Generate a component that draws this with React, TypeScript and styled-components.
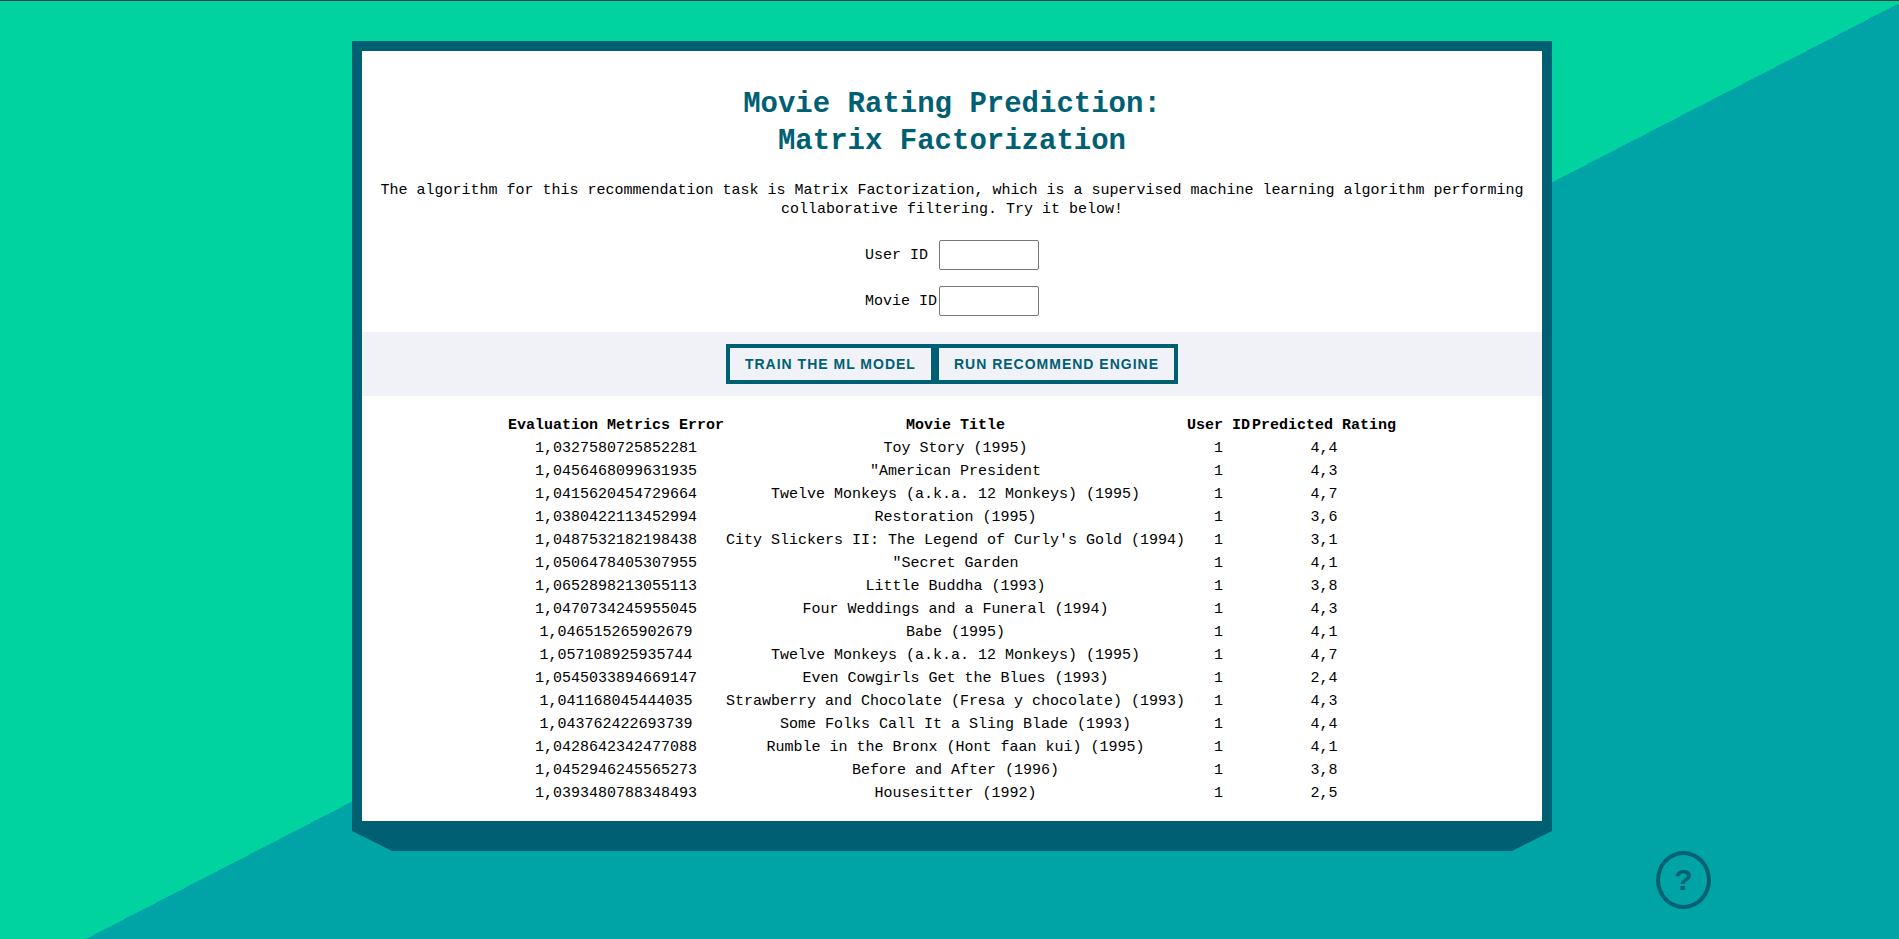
import React from "react";
import styled, { createGlobalStyle } from "styled-components";

const colors = {
  green: "#01d3a0",
  teal: "#00a4a6",
  dark: "#006073",
  band: "#f0f2f7",
};

const GlobalStyle = createGlobalStyle`
  * { box-sizing: border-box; }
  body { margin: 0; }
`;

const Page = styled.main`
  min-height: 100vh;
  padding: 40px 0 30px 5px;
  border-top: 1px solid #3c4043;
  background: ${colors.teal}
    linear-gradient(to bottom right, ${colors.green} calc(50% + 2px), ${colors.teal} calc(50% + 2px))
    0 0 / 100% calc(100% + 42px) no-repeat;
  font-family: "Liberation Mono", monospace;
  font-size: 15px;
  line-height: 19px;
  color: #000;
`;

const Card = styled.section`
  max-width: 1200px;
  margin: 0 auto;
  border: 10px solid ${colors.dark};
  background: #fff;
  text-align: center;
`;

const CardBase = styled.div`
  max-width: 1200px;
  height: 20px;
  margin: 0 auto;
  background: ${colors.dark};
  clip-path: polygon(0 0, 100% 0, calc(100% - 40px) 100%, 40px 100%);
`;

const Intro = styled.header`
  padding: 35px 15px 0;
`;

const Title = styled.h1`
  margin: 0;
  font-size: 29px;
  line-height: 37px;
  color: ${colors.dark};
`;

const Description = styled.p`
  margin: 21px 0 0;
`;

const Fields = styled.div`
  display: flex;
  flex-direction: column;
  align-items: center;
  gap: 16px;
  padding: 21px 0 16px;
`;

const Field = styled.div`
  display: flex;
  align-items: center;
  width: 174px;
`;

const FieldLabel = styled.label`
  flex: 1;
  text-align: left;
  white-space: nowrap;
`;

const FieldInput = styled.input`
  width: 100px;
  height: 30px;
  border: 1px solid #767676;
  border-radius: 2px;
  background: #fff;
  font: inherit;
`;

const Actions = styled.div`
  display: flex;
  justify-content: center;
  padding: 12px 0;
  background: ${colors.band};
`;

const ActionButton = styled.button`
  height: 40px;
  padding: 0 15px;
  border: 4px solid ${colors.dark};
  background: transparent;
  color: ${colors.dark};
  font: bold 14px "Liberation Sans", Arial, sans-serif;
  letter-spacing: 1px;
  text-transform: uppercase;
  cursor: pointer;
`;

const Results = styled.table`
  margin: 17px auto 15px;
  border-spacing: 2px;
  white-space: nowrap;

  th,
  td {
    padding: 1px 0;
    text-align: center;
  }
`;

const HelpRow = styled.footer`
  display: flex;
  justify-content: flex-end;
  padding-right: 188px;
`;

const HelpButton = styled.button`
  width: 55px;
  height: 58px;
  padding: 0;
  border: 4px solid ${colors.dark};
  border-radius: 50%;
  background: transparent;
  color: ${colors.dark};
  font: bold 30px "Liberation Sans", Arial, sans-serif;
  cursor: pointer;
`;

const rows = [
  ["1,0327580725852281", "Toy Story (1995)", "1", "4,4"],
  ["1,0456468099631935", '"American President', "1", "4,3"],
  ["1,0415620454729664", "Twelve Monkeys (a.k.a. 12 Monkeys) (1995)", "1", "4,7"],
  ["1,0380422113452994", "Restoration (1995)", "1", "3,6"],
  ["1,0487532182198438", "City Slickers II: The Legend of Curly's Gold (1994)", "1", "3,1"],
  ["1,0506478405307955", '"Secret Garden', "1", "4,1"],
  ["1,0652898213055113", "Little Buddha (1993)", "1", "3,8"],
  ["1,0470734245955045", "Four Weddings and a Funeral (1994)", "1", "4,3"],
  ["1,046515265902679", "Babe (1995)", "1", "4,1"],
  ["1,057108925935744", "Twelve Monkeys (a.k.a. 12 Monkeys) (1995)", "1", "4,7"],
  ["1,0545033894669147", "Even Cowgirls Get the Blues (1993)", "1", "2,4"],
  ["1,041168045444035", "Strawberry and Chocolate (Fresa y chocolate) (1993)", "1", "4,3"],
  ["1,043762422693739", "Some Folks Call It a Sling Blade (1993)", "1", "4,4"],
  ["1,0428642342477088", "Rumble in the Bronx (Hont faan kui) (1995)", "1", "4,1"],
  ["1,0452946245565273", "Before and After (1996)", "1", "3,8"],
  ["1,0393480788348493", "Housesitter (1992)", "1", "2,5"],
];

const headings = ["Evaluation Metrics Error", "Movie Title", "User ID", "Predicted Rating"];

export default function App() {
  return (
    <Page>
      <GlobalStyle />
      <Card>
        <Intro>
          <Title>
            Movie Rating Prediction:
            <br />
            Matrix Factorization
          </Title>
          <Description>
            The algorithm for this recommendation task is Matrix Factorization, which is a supervised machine
            learning algorithm performing collaborative filtering. Try it below!
          </Description>
        </Intro>
        <Fields>
          <Field>
            <FieldLabel htmlFor="user-id">User ID</FieldLabel>
            <FieldInput id="user-id" type="text" />
          </Field>
          <Field>
            <FieldLabel htmlFor="movie-id">Movie ID</FieldLabel>
            <FieldInput id="movie-id" type="text" />
          </Field>
        </Fields>
        <Actions>
          <ActionButton type="button">Train the ML model</ActionButton>
          <ActionButton type="button">Run recommend engine</ActionButton>
        </Actions>
        <Results>
          <thead>
            <tr>
              {headings.map((heading) => (
                <th key={heading} scope="col">{heading}</th>
              ))}
            </tr>
          </thead>
          <tbody>
            {rows.map((row) => (
              <tr key={row[0]}>
                {row.map((cell, i) => (
                  <td key={headings[i]}>{cell}</td>
                ))}
              </tr>
            ))}
          </tbody>
        </Results>
      </Card>
      <CardBase />
      <HelpRow>
        <HelpButton type="button" aria-label="Help">?</HelpButton>
      </HelpRow>
    </Page>
  );
}
